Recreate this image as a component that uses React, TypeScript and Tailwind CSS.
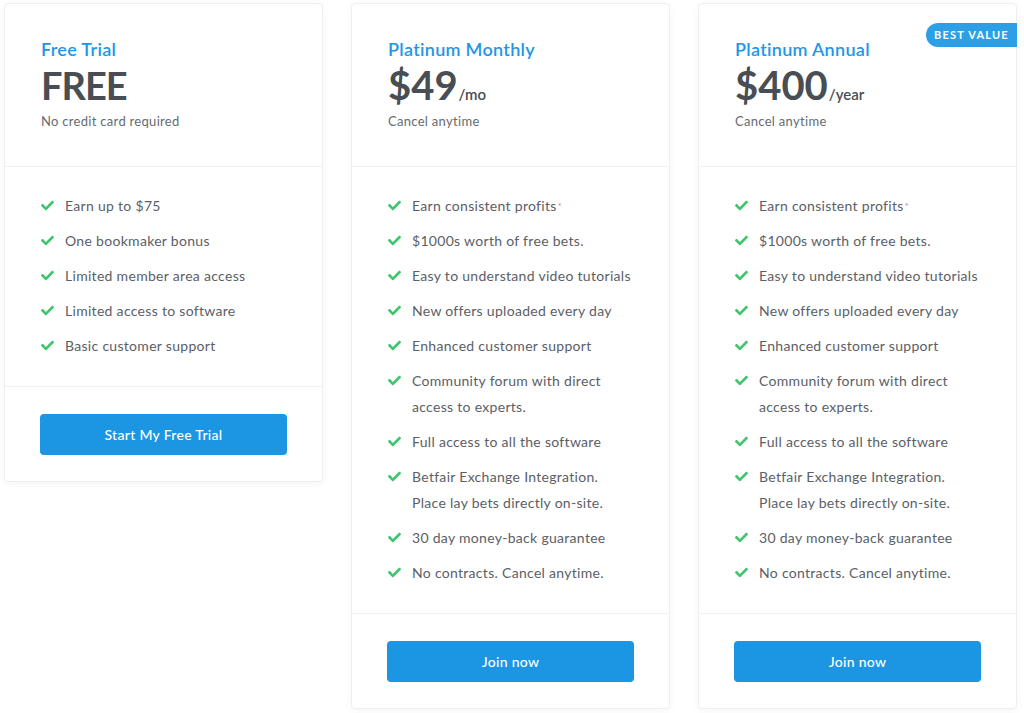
import React from "react";
import { FaCheck } from "react-icons/fa";

type Plan = {
  name: string;
  price: string;
  unit?: string;
  sub: string;
  features: React.ReactNode[];
  cta: string;
  badge?: boolean;
};

const paid: React.ReactNode[] = [
  <>Earn consistent profits<sup className="text-[9px] text-[#999] ml-[1px] relative -top-[1px]">*</sup></>,
  "$1000s worth of free bets.",
  "Easy to understand video tutorials",
  "New offers uploaded every day",
  "Enhanced customer support",
  <>Community forum with direct<br />access to experts.</>,
  "Full access to all the software",
  <>Betfair Exchange Integration.<br />Place lay bets directly on-site.</>,
  "30 day money-back guarantee",
  "No contracts. Cancel anytime.",
];

const plans: Plan[] = [
  {
    name: "Free Trial",
    price: "FREE",
    sub: "No credit card required",
    features: [
      "Earn up to $75",
      "One bookmaker bonus",
      "Limited member area access",
      "Limited access to software",
      "Basic customer support",
    ],
    cta: "Start My Free Trial",
  },
  { name: "Platinum Monthly", price: "$49", unit: "/mo", sub: "Cancel anytime", features: paid, cta: "Join now" },
  { name: "Platinum Annual", price: "$400", unit: "/year", sub: "Cancel anytime", features: paid, cta: "Join now", badge: true },
];

function Card({ p }: { p: Plan }) {
  return (
    <div className="relative w-[319px] bg-white border border-[#eceff3] rounded-[4px] shadow-[0_2px_10px_rgba(0,0,0,0.04)]">
      {p.badge && (
        <div className="absolute top-[19px] right-[-1px] h-[24px] w-[91px] flex items-center justify-center rounded-l-full bg-[#2d9fe6] text-white text-[11px] font-bold tracking-[1.2px]">
          BEST VALUE
        </div>
      )}
      <div className="h-[163px] px-[36px] pt-[33px] border-b border-[#eef1f4]">
        <div className="text-[18px] leading-[24px] font-semibold tracking-[0.3px] text-[#2196e8]">{p.name}</div>
        <div className="flex items-baseline mt-[3px] h-[42px]">
          {p.unit ? (
            <span className="text-[40px] leading-[42px] font-bold text-[#484e53]">{p.price}</span>
          ) : (
            <span className="text-[38px] leading-[42px] font-bold tracking-[-1px] text-[#484e53]">{p.price}</span>
          )}
          {p.unit && <span className="text-[15px] font-semibold text-[#484e53] ml-[1px]">{p.unit}</span>}
        </div>
        <div className="mt-[6px] text-[13px] leading-[18px] tracking-[0.3px] text-[#666b70]">{p.sub}</div>
      </div>
      <ul className="px-[36px] pt-[26px] pb-[27px] border-b border-[#eef1f4] flex flex-col gap-[9px]">
        {p.features.map((f, i) => (
          <li key={i} className="flex items-start text-[14px] leading-[26px] tracking-[0.3px] text-[#5b6066]">
            <FaCheck className="text-[#3fc66c] w-[13px] h-[13px] mt-[6px] mr-[11px] shrink-0" />
            <span>{f}</span>
          </li>
        ))}
      </ul>
      <div className="px-[35px] pt-[27px] pb-[26px]">
        <button className="w-[247px] h-[41px] rounded-[4px] bg-[#1c95e2] text-white text-[14px] font-medium tracking-[0.3px]">
          {p.cta}
        </button>
      </div>
    </div>
  );
}

export default function App() {
  return (
    <div className="w-[1024px] h-[713px] bg-white overflow-hidden" style={{ fontFamily: "Lato, 'Open Sans', sans-serif" }}>
      <div className="flex items-start gap-[28px] pl-[4px] pt-[3px]">
        {plans.map((p) => (
          <Card key={p.name} p={p} />
        ))}
      </div>
    </div>
  );
}
